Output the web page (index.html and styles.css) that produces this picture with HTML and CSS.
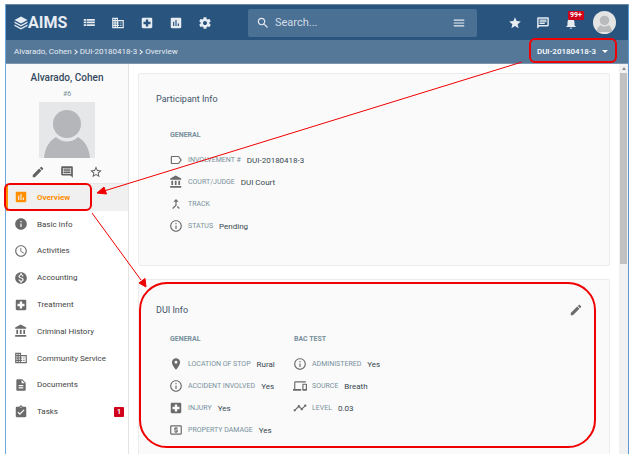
FILE: index.html
```html
<!DOCTYPE html>
<html lang="en">
<head>
<meta charset="utf-8">
<title>AIMS - Overview</title>
<link rel="stylesheet" href="styles.css">
</head>
<body>
<svg class="defs" aria-hidden="true">
<symbol id="list" viewBox="0 0 24 24"><path d="M3 5h4v3H3zm5 0h14v3H8zM3 9.500h4v3H3zm5 0h14v3H8zM3 14h4v3H3zm5 0h14v3H8z"/></symbol>
<symbol id="domain" viewBox="0 0 24 24"><path d="M12 7V3H2v18h20V7H12zM6 19H4v-2h2v2zm0-4H4v-2h2v2zm0-4H4V9h2v2zm0-4H4V5h2v2zm4 12H8v-2h2v2zm0-4H8v-2h2v2zm0-4H8V9h2v2zm0-4H8V5h2v2zm10 12h-8v-2h2v-2h-2v-2h2v-2h-2V9h8v10zm-2-8h-2v2h2v-2zm0 4h-2v2h2v-2z"/></symbol>
<symbol id="hospital" viewBox="0 0 24 24"><path d="M19 3H5c-1.100 0-2 .9-2 2v14c0 1.100.9 2 2 2h14c1.100 0 2-.9 2-2V5c0-1.100-.9-2-2-2zm-1 11h-4v4h-4v-4H6v-4h4V6h4v4h4v4z"/></symbol>
<symbol id="chart" viewBox="0 0 24 24"><path d="M19 3H5c-1.100 0-2 .9-2 2v14c0 1.100.9 2 2 2h14c1.100 0 2-.9 2-2V5c0-1.100-.9-2-2-2zM9 17H7v-7h2v7zm4 0h-2V7h2v10zm4 0h-2v-4h2v4z"/></symbol>
<symbol id="gear" viewBox="0 0 24 24"><path d="M19.430 12.980c.04-.32.07-.64.07-.98s-.03-.66-.07-.98l2.110-1.650c.19-.15.24-.42.12-.64l-2-3.460c-.12-.22-.39-.3-.61-.22l-2.490 1c-.52-.4-1.080-.73-1.690-.98l-.38-2.650C14.460 2.180 14.250 2 14 2h-4c-.25 0-.46.18-.49.42l-.38 2.650c-.61.25-1.170.59-1.690.98l-2.490-1c-.23-.09-.49 0-.61.22l-2 3.460c-.13.22-.07.49.12.64l2.110 1.650c-.04.32-.07.65-.07.98s.03.66.07.98l-2.110 1.650c-.19.15-.24.42-.12.64l2 3.460c.12.22.39.3.61.22l2.490-1c.52.4 1.080.73 1.690.98l.38 2.650c.03.24.24.42.49.42h4c.25 0 .46-.18.49-.42l.38-2.650c.61-.25 1.170-.59 1.690-.98l2.490 1c.23.09.49 0 .61-.22l2-3.460c.12-.22.07-.49-.12-.64l-2.110-1.650zM12 15.500c-1.930 0-3.500-1.570-3.500-3.500s1.570-3.500 3.500-3.500 3.500 1.570 3.500 3.500-1.570 3.500-3.500 3.500z"/></symbol>
<symbol id="search" viewBox="0 0 24 24"><path d="M15.500 14h-.79l-.28-.27C15.410 12.590 16 11.110 16 9.500 16 5.910 13.090 3 9.500 3S3 5.910 3 9.500 5.910 16 9.500 16c1.610 0 3.090-.59 4.230-1.570l.27.28v.79l5 4.990L20.490 19l-4.990-5zm-6 0C7.010 14 5 11.990 5 9.500S7.010 5 9.500 5 14 7.010 14 9.500 11.990 14 9.500 14z"/></symbol>
<symbol id="menu" viewBox="0 0 24 24"><path d="M3 18h18v-2H3v2zm0-5h18v-2H3v2zm0-7v2h18V6H3z"/></symbol>
<symbol id="star" viewBox="0 0 24 24"><path d="M12 17.270L18.180 21l-1.640-7.030L22 9.240l-7.190-.61L12 2 9.190 8.630 2 9.240l5.460 4.730L5.820 21z"/></symbol>
<symbol id="star-line" viewBox="0 0 24 24"><path d="M22 9.240l-7.190-.62L12 2 9.190 8.630 2 9.240l5.460 4.730L5.820 21 12 17.270 18.180 21l-1.630-7.030L22 9.240zM12 15.400l-3.760 2.270 1-4.280-3.320-2.880 4.380-.38L12 6.100l1.710 4.040 4.380.38-3.320 2.880 1 4.280L12 15.400z"/></symbol>
<symbol id="message" viewBox="0 0 24 24"><path d="M20 2H4c-1.100 0-2 .9-2 2v18l4-4h14c1.100 0 2-.9 2-2V4c0-1.100-.9-2-2-2zm-.5 13.500H4.500v-11h15v11zM6 11.500h9v2H6zm0-2.700h12v2H6zm0-2.800h12v2H6z"/></symbol>
<symbol id="comment" viewBox="0 0 24 24"><path d="M22 4c0-1.100-.9-2-2-2H4c-1.100 0-2 .9-2 2v12c0 1.100.9 2 2 2h14l4 4V4zM19 5v10.500H5V5h14zM6 12h12v2H6zm0-3h12v2H6zm0-3h12v2H6z" fill-rule="evenodd"/></symbol>
<symbol id="bell" viewBox="0 0 24 24"><path d="M12 22c1.100 0 2-.9 2-2h-4c0 1.100.9 2 2 2zm6-6v-5c0-3.070-1.640-5.640-4.500-6.320V4c0-.83-.67-1.500-1.500-1.500s-1.500.67-1.500 1.500v.68C7.630 5.360 6 7.920 6 11v5l-2 2v1h16v-1l-2-2z"/></symbol>
<symbol id="edit" viewBox="0 0 24 24"><path d="M3 17.250V21h3.750L17.810 9.940l-3.750-3.750L3 17.250zM20.710 7.040c.39-.39.39-1.020 0-1.410l-2.340-2.340c-.39-.39-1.020-.39-1.410 0l-1.830 1.830 3.750 3.750 1.830-1.830z"/></symbol>
<symbol id="info" viewBox="0 0 24 24"><path d="M12 2C6.480 2 2 6.480 2 12s4.480 10 10 10 10-4.480 10-10S17.520 2 12 2zm1 15h-2v-6h2v6zm0-8h-2V7h2v2z"/></symbol>
<symbol id="info-line" viewBox="0 0 24 24"><path d="M11 7h2v2h-2zm0 4h2v6h-2zm1-9C6.480 2 2 6.480 2 12s4.480 10 10 10 10-4.480 10-10S17.520 2 12 2zm0 18c-4.410 0-8-3.590-8-8s3.590-8 8-8 8 3.590 8 8-3.590 8-8 8z"/></symbol>
<symbol id="clock" viewBox="0 0 24 24"><path d="M12 2C6.470 2 2 6.480 2 12s4.470 10 10 10c5.520 0 10-4.480 10-10S17.520 2 12 2zm0 18c-4.420 0-8-3.580-8-8s3.580-8 8-8 8 3.580 8 8-3.580 8-8 8zm.5-13H11v6l5.250 3.150.75-1.230-4.500-2.670z"/></symbol>
<symbol id="money" viewBox="0 0 24 24"><path d="M12 2C6.480 2 2 6.480 2 12s4.480 10 10 10 10-4.480 10-10S17.520 2 12 2zm1.410 16.090V20h-2.670v-1.930c-1.710-.36-3.160-1.460-3.270-3.400h1.960c.1 1.050.82 1.870 2.650 1.870 1.960 0 2.400-.98 2.400-1.590 0-.83-.44-1.610-2.670-2.140-2.480-.6-4.180-1.620-4.180-3.670 0-1.720 1.390-2.840 3.110-3.210V4h2.670v1.950c1.860.45 2.790 1.860 2.850 3.390H14.300c-.05-1.110-.64-1.870-2.220-1.870-1.500 0-2.400.68-2.400 1.640 0 .84.65 1.390 2.670 1.910s4.180 1.390 4.180 3.910c-.01 1.830-1.380 2.830-3.120 3.160z"/></symbol>
<symbol id="bank" viewBox="0 0 24 24"><path d="M4 10v7h3v-7H4zm6 0v7h3v-7h-3zM2 22h19v-3H2v3zm14-12v7h3v-7h-3zM11.500 1L2 6v2h19V6l-9.500-5z"/></symbol>
<symbol id="doc" viewBox="0 0 24 24"><path d="M14 2H6c-1.100 0-2 .9-2 2v16c0 1.100.9 2 2 2h12c1.100 0 2-.9 2-2V8l-6-6zm2 16H8v-2h8v2zm0-4H8v-2h8v2zm-3-5V3.500L18.500 9H13z"/></symbol>
<symbol id="task" viewBox="0 0 24 24"><path d="M19 3h-4.180C14.400 1.840 13.300 1 12 1s-2.400.84-2.820 2H5c-1.100 0-2 .9-2 2v14c0 1.100.9 2 2 2h14c1.100 0 2-.9 2-2V5c0-1.100-.9-2-2-2zm-7 0c.55 0 1 .45 1 1s-.45 1-1 1-1-.45-1-1 .45-1 1-1zm-2 14l-4-4 1.410-1.410L10 14.170l6.590-6.590L18 9l-8 8z"/></symbol>
<symbol id="label" viewBox="0 0 24 24"><path d="M17.630 5.840C17.270 5.330 16.670 5 16 5H5c-1.100 0-2 .9-2 2v10c0 1.100.9 2 2 2h11c.67 0 1.270-.33 1.630-.84L22 12l-4.370-6.160zM16 17H5V7h11l3.550 5L16 17z"/></symbol>
<symbol id="merge" viewBox="0 0 24 24"><path d="M17 20.410L18.410 19 15 15.590 13.590 17 17 20.410zM7.500 8H11v5.590L5.590 19 7 20.410l6-6V8h3.500L12 3.500 7.500 8z"/></symbol>
<symbol id="place" viewBox="0 0 24 24"><path d="M12 2C8.130 2 5 5.130 5 9c0 5.250 7 13 7 13s7-7.750 7-13c0-3.870-3.130-7-7-7zm0 9.500c-1.380 0-2.500-1.120-2.500-2.500s1.120-2.500 2.500-2.500 2.500 1.120 2.500 2.500-1.120 2.500-2.500 2.500z"/></symbol>
<symbol id="devices" viewBox="0 0 24 24"><path d="M4 6h18V4H4c-1.100 0-2 .9-2 2v11H0v3h14v-3H4V6zm19 2h-6c-.55 0-1 .45-1 1v10c0 .55.45 1 1 1h6c.55 0 1-.45 1-1V9c0-.55-.45-1-1-1zm-1 9h-4v-7h4v7z"/></symbol>
<symbol id="trend" viewBox="0 0 24 24"><path d="M23 8c0 1.100-.9 2-2 2-.18 0-.35-.02-.51-.07l-3.560 3.550c.05.16.07.34.07.52 0 1.100-.9 2-2 2s-2-.9-2-2c0-.18.02-.36.07-.52l-2.550-2.550c-.16.05-.34.07-.52.07s-.36-.02-.52-.07l-4.550 4.560c.05.16.07.33.07.51 0 1.100-.9 2-2 2s-2-.9-2-2 .9-2 2-2c.18 0 .35.02.51.07l4.560-4.550C8.020 9.360 8 9.180 8 9c0-1.100.9-2 2-2s2 .9 2 2c0 .18-.02.36-.07.52l2.550 2.550c.16-.05.34-.07.52-.07s.36.02.52.07l3.550-3.560C19.020 8.350 19 8.180 19 8c0-1.100.9-2 2-2s2 .9 2 2z"/></symbol>
<symbol id="atm" viewBox="0 0 24 24"><path d="M11 17h2v-1h1c.55 0 1-.45 1-1v-3c0-.55-.45-1-1-1h-3v-1h4V8h-2V7h-2v1h-1c-.55 0-1 .45-1 1v3c0 .55.45 1 1 1h3v1H9v2h2v1zm9-13H4c-1.110 0-2 .89-2 2v12c0 1.110.89 2 2 2h16c1.110 0 2-.89 2-2V6c0-1.110-.89-2-2-2zm0 14H4V6h16v12z"/></symbol>
<symbol id="person" viewBox="0 0 56 56"><circle cx="28" cy="22" r="14"/><path d="M5 56c1-10 5-17 12-21 6 6 16 6 22 0 7 4 11 11 12 21z"/></symbol>
</svg>

<div class="app">
  <header class="topbar">
    <a class="logo" href="#"><svg viewBox="0 0 28 28"><path d="M14 1l13 7-13 7L1 8z"/><path d="M1 11l13 7 13-7v3l-13 7-13-7z"/><path d="M1 17l13 7 13-7v3l-13 7-13-7z"/></svg><span>AIMS</span></a>
    <nav class="tools" aria-label="Main">
      <button aria-label="List"><svg><use href="#list"/></svg></button>
      <button aria-label="Agencies"><svg><use href="#domain"/></svg></button>
      <button aria-label="Treatment"><svg><use href="#hospital"/></svg></button>
      <button aria-label="Reports"><svg><use href="#chart"/></svg></button>
      <button aria-label="Settings"><svg><use href="#gear"/></svg></button>
    </nav>
    <form class="search">
      <svg><use href="#search"/></svg>
      <input type="text" placeholder="Search..." aria-label="Search">
      <button type="button" aria-label="Search options"><svg><use href="#menu"/></svg></button>
    </form>
    <div class="user">
      <button aria-label="Favorites"><svg><use href="#star"/></svg></button>
      <button aria-label="Messages"><svg><use href="#message"/></svg></button>
      <button class="alerts" aria-label="Notifications"><svg><use href="#bell"/></svg><span class="count">99+</span></button>
      <button class="face" aria-label="Account"><svg><use href="#person"/></svg></button>
    </div>
  </header>
  <div class="subbar">
    <nav class="crumbs" aria-label="Breadcrumb"><a href="#">Alvarado, Cohen</a><i></i><a href="#">DUI-20180418-3</a><i></i><a href="#">Overview</a></nav>
    <button class="case">DUI-20180418-3<span class="caret"></span></button>
  </div>
  <div class="body">
    <aside class="side">
      <div class="profile">
        <h1>Alvarado, Cohen</h1>
        <p>#6</p>
        <svg class="photo"><use href="#person"/></svg>
        <div class="actions">
          <button aria-label="Edit"><svg><use href="#edit"/></svg></button>
          <button aria-label="Comment"><svg><use href="#comment"/></svg></button>
          <button aria-label="Favorite"><svg><use href="#star-line"/></svg></button>
        </div>
      </div>
      <nav class="menu" aria-label="Participant">
        <a class="active" href="#"><svg><use href="#chart"/></svg>Overview</a>
        <a href="#"><svg><use href="#info"/></svg>Basic Info</a>
        <a href="#"><svg><use href="#clock"/></svg>Activities</a>
        <a href="#"><svg><use href="#money"/></svg>Accounting</a>
        <a href="#"><svg><use href="#hospital"/></svg>Treatment</a>
        <a href="#"><svg><use href="#bank"/></svg>Criminal History</a>
        <a href="#"><svg><use href="#domain"/></svg>Community Service</a>
        <a href="#"><svg><use href="#doc"/></svg>Documents</a>
        <a href="#"><svg><use href="#task"/></svg>Tasks<span class="count">1</span></a>
      </nav>
    </aside>
    <main>
      <section class="card">
        <header><h2>Participant Info</h2></header>
        <div class="groups roomy">
          <div>
            <h3>GENERAL</h3>
            <dl>
              <div><svg><use href="#label"/></svg><dt>INVOLVEMENT #</dt><dd>DUI-20180418-3</dd></div>
              <div><svg><use href="#bank"/></svg><dt>COURT/JUDGE</dt><dd>DUI Court</dd></div>
              <div><svg><use href="#merge"/></svg><dt>TRACK</dt><dd></dd></div>
              <div><svg><use href="#info-line"/></svg><dt>STATUS</dt><dd>Pending</dd></div>
            </dl>
          </div>
        </div>
      </section>
      <section class="card">
        <header><h2>DUI Info</h2><button aria-label="Edit DUI Info"><svg><use href="#edit"/></svg></button></header>
        <div class="groups">
          <div>
            <h3>GENERAL</h3>
            <dl>
              <div><svg><use href="#place"/></svg><dt>LOCATION OF STOP</dt><dd>Rural</dd></div>
              <div><svg><use href="#info-line"/></svg><dt>ACCIDENT INVOLVED</dt><dd>Yes</dd></div>
              <div><svg><use href="#hospital"/></svg><dt>INJURY</dt><dd>Yes</dd></div>
              <div><svg><use href="#atm"/></svg><dt>PROPERTY DAMAGE</dt><dd>Yes</dd></div>
            </dl>
          </div>
          <div>
            <h3>BAC TEST</h3>
            <dl>
              <div><svg><use href="#info-line"/></svg><dt>ADMINISTERED</dt><dd>Yes</dd></div>
              <div><svg><use href="#devices"/></svg><dt>SOURCE</dt><dd>Breath</dd></div>
              <div><svg><use href="#trend"/></svg><dt>LEVEL</dt><dd>0.03</dd></div>
            </dl>
          </div>
        </div>
      </section>
    </main>
    <div class="scrollbar" aria-hidden="true"><span class="up"></span><span class="thumb"></span></div>
  </div>
</div>

<svg class="notes" viewBox="0 0 636 454" aria-hidden="true">
  <rect x="530" y="39" width="86" height="23" rx="5"/>
  <rect x="5" y="184" width="86" height="26" rx="5"/>
  <rect x="140" y="283" width="455" height="164" rx="27"/>
  <path class="line" d="M522 62L104 191M92 213l49 67"/>
  <path class="head" d="M97 193l7-6 2.500 7zM146 287l-7-4 6-4.500z"/>
</svg>
</body>
</html>
```
FILE: styles.css
```css
* { box-sizing: border-box; }
body {
  margin: 0;
  background: #fff;
  font-family: Roboto, "Liberation Sans", sans-serif;
  font-size: 8px;
  color: #444;
  overflow: hidden;
}
h1, h2, h3, p, dl, dd { margin: 0; }
a { color: inherit; text-decoration: none; }
button { border: 0; padding: 0; background: none; color: inherit; font: inherit; display: flex; align-items: center; justify-content: center; }
svg { width: 14px; height: 14px; fill: currentColor; flex: none; display: block; }
.defs { position: absolute; width: 0; height: 0; }

.app {
  display: flex;
  flex-direction: column;
  height: calc(100vh - 4px);
  margin: 4px 7px 0 5px;
  border-left: 1px solid #6fa8dc;
  border-right: 1px solid #5b9bd5;
}
.topbar {
  display: flex;
  align-items: center;
  flex: none;
  height: 36px;
  padding: 0 12px 0 8px;
  border-top: 1px solid #6a86a3;
  background: #28547e;
  color: #e6ecf2;
}
.logo { display: flex; align-items: center; font-size: 16px; font-weight: 700; width: 60px; }
.tools { display: flex; }
.tools button { width: 29px; height: 28px; }
.search {
  display: flex;
  align-items: center;
  flex: 1;
  height: 28px;
  margin: 0 24px 0 29px;
  padding: 0 11px 0 8px;
  border-radius: 2px;
  background: #4a7094;
}
.search input {
  flex: 1;
  min-width: 0;
  padding: 0;
  margin-left: 5px;
  border: 0;
  background: none;
  color: #e6ecf2;
  font: 11px Roboto, sans-serif;
}
.search input::placeholder { color: #d3dde7; opacity: 1; }
.user { display: flex; align-items: center; }
.user button { width: 28px; height: 28px; }
.alerts { position: relative; }
.count { background: #d0021b; color: #fff; font-weight: 700; border-radius: 1px; }
.alerts .count { position: absolute; left: 11px; top: 2px; width: 16px; font-size: 7px; line-height: 9px; }
.user .face { width: 23px; height: 23px; margin-left: 8px; border-radius: 50%; background: #e4e4e4; color: #b9babc; overflow: hidden; }
.face svg { width: 19px; height: 19px; }
.subbar {
  display: flex;
  align-items: center;
  justify-content: space-between;
  flex: none;
  height: 24px;
  padding: 0 20px 0 8px;
  background: #557899;
  border-bottom: 1px solid #7d97b1;
  color: #e6ecf2;
}
.crumbs { display: flex; align-items: center; }
.crumbs i { width: 4px; height: 4px; margin: 0 3px 0 1px; border: solid; border-width: 1px 1px 0 0; transform: rotate(45deg); }
.case { font-weight: 500; color: #fff; gap: 6px; }
.caret { border: 3px solid transparent; border-top-color: #fff; border-bottom: 0; }

.body { display: flex; flex: 1; min-height: 0; }
.side { width: 123px; flex: none; border-right: 1px solid #e4e4e4; background: #fff; }
.profile {
  display: flex;
  flex-direction: column;
  align-items: center;
  height: 120px;
  padding-top: 7px;
  background: #fafafa;
  border-bottom: 1px solid #e8e8e8;
}
.profile h1 { font-size: 10px; line-height: 14px; font-weight: 500; color: #34495e; }
.profile p { font-size: 7px; line-height: 10px; margin: 4px 0 3px; color: #78909c; }
.photo { width: 56px; height: 56px; background: #e6e7e9; color: #b5b6ba; }
.actions { display: flex; gap: 15px; margin-top: 7px; color: #616161; }
.menu { display: flex; flex-direction: column; height: 241px; }
.menu a { display: flex; align-items: center; flex: 1; gap: 9px; padding: 0 4px 0 8px; color: #444; }
.menu svg { color: #6b6b6b; }
.menu .active { background: #f0f0f0; color: #ff8f00; font-weight: 700; box-shadow: inset 2px 0 #ff8f00; }
.menu .active svg { color: #ff8f00; }
.menu .count { width: 10px; margin-left: auto; font-size: 7px; line-height: 10px; text-align: center; }

main { flex: 1; min-width: 0; padding: 9px 9px 0; overflow: hidden; }
.card { height: 193px; margin-bottom: 13px; padding: 0 26px 0 17px; background: #fafafa; border: 1px solid #ececec; border-radius: 2px; }
.card header { display: flex; align-items: center; justify-content: space-between; height: 50px; }
.card header + .groups { padding-left: 14px; }
.card + .card header { height: 45px; padding-top: 14px; }
.card h2 { font-size: 9px; font-weight: 400; color: #44546a; }
.card header svg { color: #6b6b6b; }
.groups { display: grid; grid-template-columns: 124px 1fr; padding-top: 8px; }
.roomy { padding-top: 5px; }
.groups h3 { font-size: 7px; line-height: 12px; font-weight: 700; color: #78909c; margin-bottom: 8px; }
dl > div { display: flex; align-items: center; height: 22px; white-space: nowrap; }
dl svg { margin-right: 5px; margin-left: -1px; color: #6b6b6b; }
dt { font-size: 7px; color: #78909c; margin-right: 6px; }
dd { color: #37474f; }

.scrollbar { display: flex; flex-direction: column; align-items: center; width: 9px; background: #f1f1f1; }
.up { margin: 3px 0; border: 2px solid transparent; border-bottom: 3px solid #8a8a8a; border-top: 0; }
.thumb { width: 7px; height: 191px; background: #c1c1c1; }

.notes { position: absolute; left: 0; top: 0; width: 636px; height: 454px; fill: none; stroke: #f00000; stroke-width: 2; pointer-events: none; }
.notes .line { stroke-width: 1; }
.notes .head { fill: #f00000; stroke-width: 1; }
```
